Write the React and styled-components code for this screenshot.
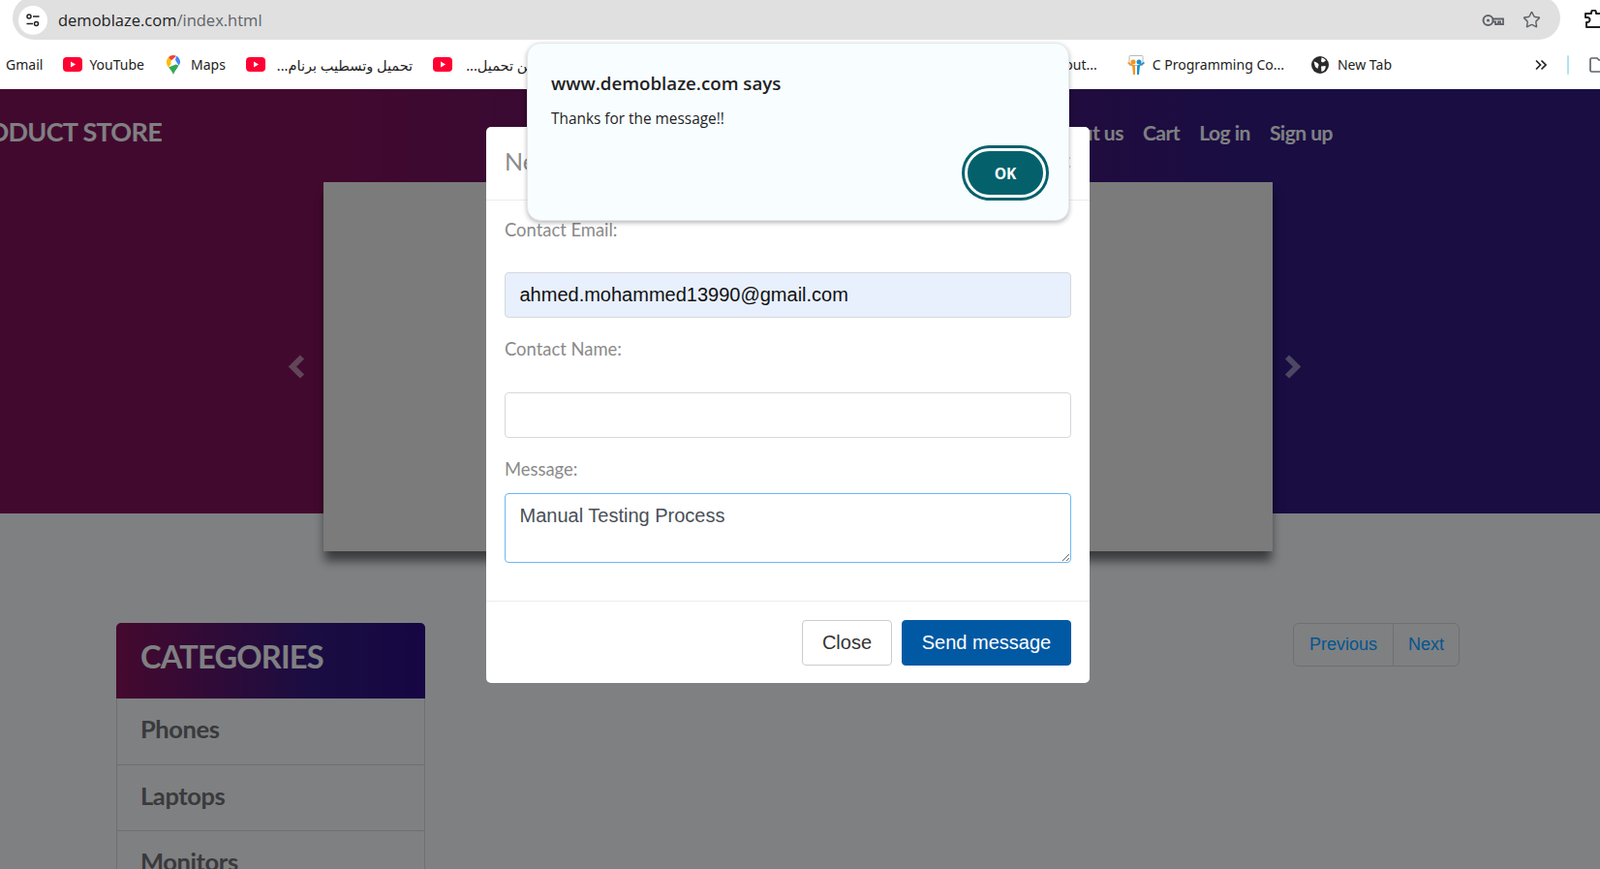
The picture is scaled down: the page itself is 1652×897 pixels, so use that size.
import React from 'react';
import styled, { createGlobalStyle } from 'styled-components';
import { Star } from 'lucide-react';

const GlobalStyle = createGlobalStyle`
html, body {
    margin: 0;
    padding: 0;
    background: #fff;
    overflow: hidden;
}
* {
    box-sizing: border-box;
}
`;

const Screen = styled.div`
position: relative;
width: 1652px;
height: 897px;
overflow: hidden;
background: #fff;
`;

/* browser chrome */
const AddressRow = styled.div`
height: 41px;
display: flex;
align-items: flex-end;
padding-left: 13px;
`;

const AddressBar = styled.div`
width: 1598px;
height: 45px;
flex: none;
display: flex;
align-items: center;
padding: 4px 20px 0 6px;
border-radius: 23px;
background: #e0e0e0;
font-family: "Open Sans", sans-serif;
font-size: 16.5px;
`;

const SiteInfo = styled.div`
width: 30px;
height: 30px;
border-radius: 50%;
background: #fff;
display: flex;
align-items: center;
justify-content: center;
margin-right: 11px;
`;

const Host = styled.span`
color: #222;
`;

const UrlPath = styled.span`
color: #5f6368;
`;

const BarIcons = styled.div`
margin-left: auto;
display: flex;
align-items: center;
gap: 19px;
color: #5f6368;
`;

const PuzzleSlot = styled.div`
flex: none;
margin-left: 25px;
margin-bottom: 12px;
display: flex;
`;

const Bookmarks = styled.div`
height: 51px;
display: flex;
align-items: center;
padding-left: 6px;
font-family: "Noto Sans", "DejaVu Sans", sans-serif;
font-size: 14px;
color: #222;
white-space: nowrap;
`;

const Bookmark = styled.div`
display: flex;
align-items: center;
gap: ${props => props.$gap || 8}px;
margin-left: ${props => props.$left || 0}px;
`;

const BookmarkText = styled.span`
direction: ${props => props.$rtl ? 'rtl' : 'ltr'};
font-size: ${props => props.$rtl ? 14.5 : 14}px;
`;

const ToolbarEnd = styled.div`
margin-left: auto;
margin-right: -9px;
display: flex;
align-items: center;
`;

const Divider = styled.div`
width: 2px;
height: 20px;
margin: 0 21px 0 21px;
border-radius: 1px;
background: #b2e3f2;
`;

/* page below the chrome */
const Viewport = styled.div`
position: relative;
height: 805px;
overflow: hidden;
font-family: Lato, sans-serif;
background: #fff;
`;

const Hero = styled.div`
height: 438px;
background: linear-gradient(to right, #851056 0%, #851056 20%, #33187f 78%, #33187f 100%);
`;

const Nav = styled.div`
height: 96px;
display: flex;
justify-content: space-between;
align-items: flex-start;
padding: 28px 276px 0 0;
color: #fff;
`;

const Brand = styled.div`
margin-left: -45px;
font-size: 27px;
line-height: 32px;
font-weight: 700;
letter-spacing: -0.7px;
white-space: nowrap;
`;

const NavLinks = styled.div`
display: flex;
gap: 20px;
margin-top: 3px;
font-size: 21px;
line-height: 28px;
font-weight: 700;
letter-spacing: -0.5px;
`;

const Carousel = styled.div`
position: relative;
width: 980px;
height: 381px;
margin-left: 334px;
background: #f7f5f1;
box-shadow: 0 11px 10px -1px rgba(0,0,0,0.55);
`;

const CarouselArrow = styled.svg`
position: absolute;
top: 178px;
${props => props.$side === 'left' ? 'left: -37px;' : 'right: -30px;'}
`;

const Content = styled.div`
display: flex;
justify-content: space-between;
align-items: flex-start;
padding: 113px 145px 0 120px;
`;

const Categories = styled.div`
width: 319px;
`;

const CategoriesTitle = styled.div`
height: 78px;
padding: 15px 25px 0;
border-radius: 5px 5px 0 0;
background: linear-gradient(to right, #8a1056 0%, #33187f 65%, #2c0a80 100%);
color: #fff;
font-size: 32.6px;
line-height: 40px;
font-weight: 700;
letter-spacing: -0.8px;
`;

const CategoryItem = styled.div`
height: 68.5px;
padding: 0 24px 5px;
display: flex;
align-items: center;
border: 1px solid #ddd;
border-top: 0;
color: #727272;
font-size: 25.5px;
letter-spacing: -0.4px;
font-weight: 700;
`;

const Pagination = styled.div`
display: flex;
height: 45px;
border: 1px solid #ddd;
border-radius: 6px;
font-family: "Liberation Sans", Arial, sans-serif;
font-size: 18px;
`;

const PageLink = styled.div`
display: flex;
align-items: center;
padding: 0 ${props => props.$pad}px;
border-left: ${props => props.$divided ? '1px solid #ddd' : '0'};
`;

// the link blue stays this saturated over the dimmed page
const PageLabel = styled.span`
position: relative;
z-index: 1;
color: #03558f;
`;

/* contact modal */
const Backdrop = styled.div`
position: absolute;
inset: 0;
background: rgba(0,1,5,0.5);
`;

const Modal = styled.div`
position: absolute;
top: 39px;
left: 502px;
width: 623px;
border-radius: 5px;
background: #fff;
`;

const ModalHeader = styled.div`
height: 76px;
display: flex;
align-items: center;
justify-content: space-between;
padding: 0 18px 6px 19px;
border-bottom: 1px solid #e9ecef;
color: #8b8b8b;
font-size: 25px;
`;

const ModalClose = styled.span`
color: #c4c4c4;
`;

const ModalBody = styled.div`
padding: 19px 19px 39px;
`;

const FieldLabel = styled.label`
display: block;
height: 24px;
line-height: 22px;
margin-bottom: ${props => props.$gap}px;
color: #8a8a8a;
font-size: 18.4px;
`;

const TextInput = styled.input`
display: block;
width: 100%;
height: 47px;
margin-bottom: 21px;
padding: 0 14.5px;
border: 1px solid #d5d8db;
border-radius: 4px;
background: ${props => props.$filled ? '#e8f0fe' : '#fff'};
color: #111;
font-family: "Liberation Sans", Arial, sans-serif;
font-size: 20px;
outline: none;
`;

const MessageInput = styled.textarea`
display: block;
width: 100%;
height: 72px;
padding: 8px 14.5px;
border: 1px solid #6db7f4;
border-radius: 4px;
color: #495057;
font-family: "Liberation Sans", Arial, sans-serif;
font-size: 20px;
line-height: 28px;
outline: none;
`;

const ModalFooter = styled.div`
display: flex;
justify-content: flex-end;
gap: 10px;
padding: 19px 19px 18px;
border-top: 1px solid #e9ecef;
`;

const FooterButton = styled.button`
height: 47px;
width: ${props => props.$width}px;
padding: 0;
border: 1px solid ${props => props.$primary ? '#0259a3' : '#ccc'};
border-radius: 4px;
background: ${props => props.$primary ? '#0259a3' : '#fff'};
color: ${props => props.$primary ? '#fff' : '#333'};
font-family: "Liberation Sans", Arial, sans-serif;
font-size: 20px;
`;

/* native alert */
const AlertBox = styled.div`
position: absolute;
top: 44px;
left: 544px;
width: 560px;
height: 184px;
padding: 28px 19px 0 24px;
border: 1px solid #e3e8ea;
border-radius: 14px;
background: #f8fdff;
box-shadow: 0 2px 5px rgba(0,0,0,0.28);
font-family: "Open Sans", sans-serif;
color: #1f1f1f;
`;

const AlertTitle = styled.div`
font-size: 18.7px;
line-height: 26px;
font-weight: 600;
`;

const AlertText = styled.div`
margin-top: 13px;
font-size: 15.4px;
line-height: 22px;
`;

const AlertActions = styled.div`
display: flex;
justify-content: flex-end;
margin-top: 19px;
`;

const OkButton = styled.button`
width: 84px;
height: 51px;
margin-right: 4px;
border: 3px solid #fff;
border-radius: 26px;
background: #04616b;
box-shadow: 0 0 0 3px #04616b;
color: #fff;
font-family: "Open Sans", sans-serif;
font-size: 15.5px;
font-weight: 700;
`;

const TuneIcon = () => (
    <svg width="16" height="16" viewBox="0 0 16 16" fill="none" stroke="#222" strokeWidth="1.5">
        <circle cx="4" cy="4" r="2" />
        <path d="M8 4h6.5M1.5 11.5H8" />
        <circle cx="11.5" cy="11.5" r="2" />
    </svg>
);

const KeyIcon = () => (
    <svg width="23" height="14" viewBox="0 0 23 14" fill="none" stroke="#5f6368" strokeWidth="2">
        <circle cx="6.5" cy="7" r="5" />
        <circle cx="6.5" cy="7" r="1.6" fill="#5f6368" stroke="none" />
        <path d="M11.5 5.5H22V11h-3V8.5h-2V11h-3V8.5h-2.5" strokeWidth="1.8" />
    </svg>
);

const PuzzleIcon = () => (
    <svg width="22" height="19" viewBox="0 0 22 19" fill="none" stroke="#222" strokeWidth="2" strokeLinejoin="round">
        <path d="M1 4h6V3a2.500 2.500 0 0 1 5 0v1h9v14H2v-5h1a2.500 2.500 0 0 0 0-5H1z" />
    </svg>
);

const YoutubeIcon = () => (
    <svg width="20" height="15" viewBox="0 0 20 15">
        <rect width="20" height="15" rx="4" fill="#ff0033" />
        <path d="M8 4.500v6l5-3z" fill="#fff" />
    </svg>
);

const MapsIcon = () => (
    <svg width="14" height="20" viewBox="0 0 14 20">
        <path d="M7 20C6 17 4 15 2 12.500L9.500 9.500 12.500 10.500C11 14 8 16.500 7 20z" fill="#34a853" />
        <path d="M2 12.500C.7 11 0 9 0 7c0-2 .8-3.700 2-5l3 3.500v3z" fill="#fbbc04" />
        <path d="M2 2C3.300.8 5 0 7 0c1 0 2 .2 3 .7L5 5.500z" fill="#ea4335" />
        <path d="M10 .7C12.400 1.800 14 4.200 14 7c0 1.200-.5 2.500-1.500 3.500L9 5z" fill="#4285f4" />
        <circle cx="7" cy="7" r="2.600" fill="#fff" />
    </svg>
);

const SlideIcon = () => (
    <svg width="18" height="20" viewBox="0 0 18 20">
        <rect x="2" y="0.500" width="14" height="10" rx="1" fill="none" stroke="#b9b9b9" />
        <circle cx="6" cy="7" r="2.500" fill="#f7941e" />
        <circle cx="12" cy="7" r="2.500" fill="#1a8fd1" />
        <path d="M0 8c2 2 4 2.500 5 2.500L6 20h2V11L1 7z" fill="#f7941e" />
        <path d="M18 8c-2 2-4 2.500-5 2.500L12 20h-2V11l7-4z" fill="#1a8fd1" />
    </svg>
);

const GlobeIcon = () => (
    <svg width="18" height="18" viewBox="0 0 18 18">
        <circle cx="9" cy="9" r="9" fill="#2b2b2b" />
        <path d="M2.500 5.500C5 6 7 7 7.500 8.500S6.500 11 6.500 13L4 11zM10.500 1.500C13 2 14 3 15 4.500l-3 2-2-1zM10 10.500l4.500-.5c.5 1.500 0 3-1.500 5l-2.500 1z" fill="#fff" />
    </svg>
);

const ChevronsIcon = () => (
    <svg width="12" height="12" viewBox="0 0 12 12" fill="none" stroke="#222" strokeWidth="1.700">
        <path d="M1 1.500L5.500 6 1 10.500M6.500 1.500L11 6 6.500 10.500" />
    </svg>
);

const FolderIcon = () => (
    <svg width="20" height="16" viewBox="0 0 20 16" fill="none" stroke="#5f6368" strokeWidth="1.700">
        <path d="M1 2.500A1.500 1.500 0 0 1 2.500 1H8l2 2h9v12H2.500A1.500 1.500 0 0 1 1 13.500z" />
    </svg>
);

const App = () => {
    return (
        <Screen>
            <GlobalStyle />
            <AddressRow>
                <AddressBar>
                    <SiteInfo><TuneIcon /></SiteInfo>
                    <Host>demoblaze.com</Host>
                    <UrlPath>/index.html</UrlPath>
                    <BarIcons>
                        <KeyIcon />
                        <Star size={19} strokeWidth={1.8} />
                    </BarIcons>
                </AddressBar>
                <PuzzleSlot><PuzzleIcon /></PuzzleSlot>
            </AddressRow>
            <Bookmarks>
                <Bookmark>Gmail</Bookmark>
                <Bookmark $left={21} $gap={7}><YoutubeIcon />YouTube</Bookmark>
                <Bookmark $left={23} $gap={11}><MapsIcon />Maps</Bookmark>
                <Bookmark $left={21} $gap={12}>
                    <YoutubeIcon />
                    <BookmarkText $rtl>تحميل وتسطيب برنام...</BookmarkText>
                </Bookmark>
                <Bookmark $left={21} $gap={14}>
                    <YoutubeIcon />
                    <BookmarkText $rtl>من تحميل...</BookmarkText>
                </Bookmark>
                <ToolbarEnd>
                    <Bookmark>About...</Bookmark>
                    <Bookmark $left={31}><SlideIcon />C Programming Co...</Bookmark>
                    <Bookmark $left={28} $gap={9}><GlobeIcon />New Tab</Bookmark>
                    <Bookmark $left={148}><ChevronsIcon /></Bookmark>
                    <Divider />
                    <FolderIcon />
                </ToolbarEnd>
            </Bookmarks>
            <Viewport>
                <Hero>
                    <Nav>
                        <Brand>PRODUCT STORE</Brand>
                        <NavLinks>
                            <span>Home</span>
                            <span>Contact</span>
                            <span>About us</span>
                            <span>Cart</span>
                            <span>Log in</span>
                            <span>Sign up</span>
                        </NavLinks>
                    </Nav>
                    <Carousel>
                        <CarouselArrow $side="left" width="18" height="25" viewBox="0 0 18 25">
                            <path d="M15 2.500L5 12.500l10 10" fill="none" stroke="#fff" strokeOpacity="0.5" strokeWidth="6" />
                        </CarouselArrow>
                        <CarouselArrow $side="right" width="18" height="25" viewBox="0 0 18 25">
                            <path d="M3 2.500l10 10-10 10" fill="none" stroke="#fff" strokeOpacity="0.5" strokeWidth="6" />
                        </CarouselArrow>
                    </Carousel>
                </Hero>
                <Content>
                    <Categories>
                        <CategoriesTitle>CATEGORIES</CategoriesTitle>
                        <CategoryItem>Phones</CategoryItem>
                        <CategoryItem>Laptops</CategoryItem>
                        <CategoryItem>Monitors</CategoryItem>
                    </Categories>
                    <Pagination>
                        <PageLink $pad={16}><PageLabel>Previous</PageLabel></PageLink>
                        <PageLink $pad={15} $divided><PageLabel>Next</PageLabel></PageLink>
                    </Pagination>
                </Content>
                <Backdrop />
                <Modal>
                    <ModalHeader>
                        <span>New message</span>
                        <ModalClose>×</ModalClose>
                    </ModalHeader>
                    <ModalBody>
                        <FieldLabel $gap={31}>Contact Email:</FieldLabel>
                        <TextInput $filled readOnly value="ahmed.mohammed13990@gmail.com" />
                        <FieldLabel $gap={32}>Contact Name:</FieldLabel>
                        <TextInput readOnly value="" />
                        <FieldLabel $gap={12}>Message:</FieldLabel>
                        <MessageInput readOnly value="Manual Testing Process" />
                    </ModalBody>
                    <ModalFooter>
                        <FooterButton $width={93}>Close</FooterButton>
                        <FooterButton $width={175} $primary>Send message</FooterButton>
                    </ModalFooter>
                </Modal>
            </Viewport>
            <AlertBox>
                <AlertTitle>www.demoblaze.com says</AlertTitle>
                <AlertText>Thanks for the message!!</AlertText>
                <AlertActions>
                    <OkButton>OK</OkButton>
                </AlertActions>
            </AlertBox>
        </Screen>
    );
};

export default App;
